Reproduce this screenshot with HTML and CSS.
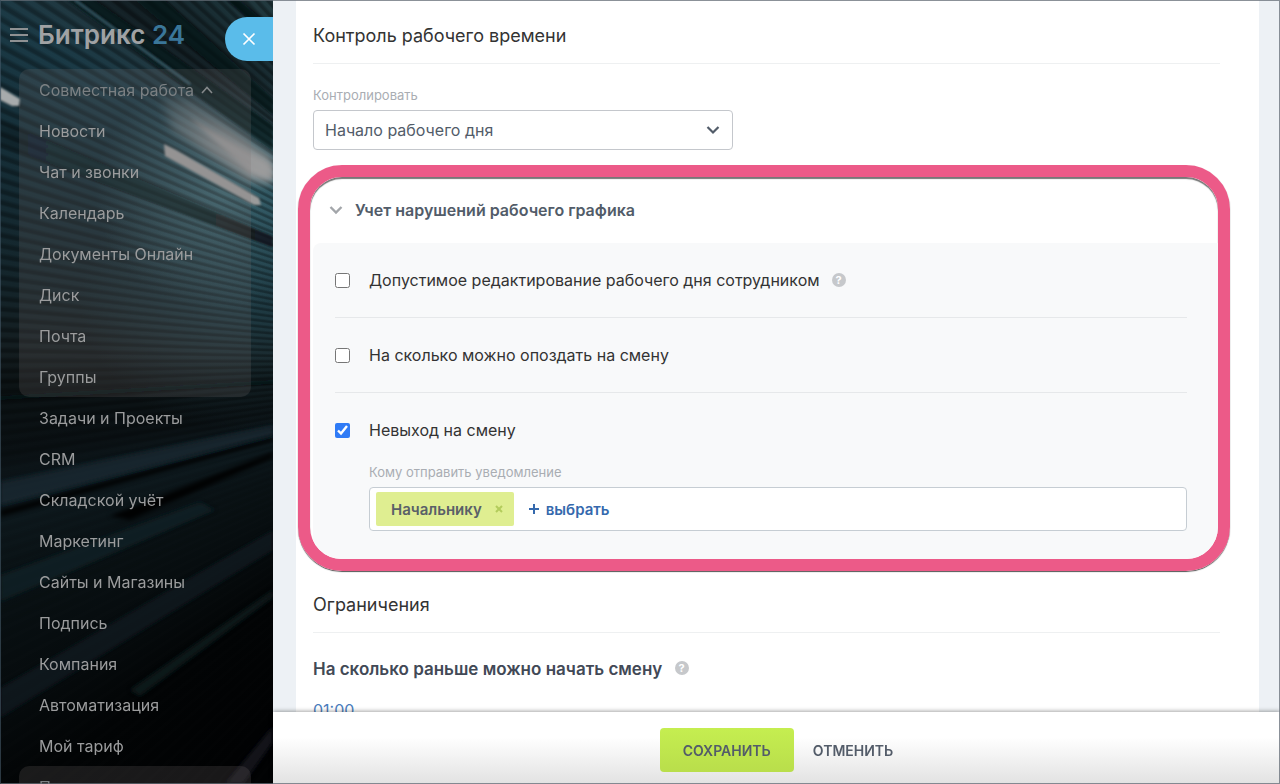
FILE: index.html
```html
<!DOCTYPE html>
<html lang="ru">
<head>
<meta charset="utf-8">
<title>Битрикс 24</title>
<link rel="stylesheet" href="styles.css">
</head>
<body>
<div class="app">
  <aside class="sidebar">
    <svg class="streaks" width="273" height="784" viewBox="0 0 273 784" aria-hidden="true">
      <defs>
        <filter id="soft"><feGaussianBlur stdDeviation="5"/></filter>
        <filter id="crisp"><feGaussianBlur stdDeviation="1"/></filter>
        <filter id="haze"><feGaussianBlur stdDeviation="2"/></filter>
        <linearGradient id="beam" x1="0" y1="0" x2="1" y2="1">
          <stop offset="0" stop-color="#7f8c90" stop-opacity=".1"/>
          <stop offset=".5" stop-color="#8a8f91" stop-opacity=".8"/>
          <stop offset="1" stop-color="#9a9c9d"/>
        </linearGradient>
        <linearGradient id="fade" x1="0" y1="0" x2="1" y2="0">
          <stop offset="0" stop-color="#0a1316" stop-opacity=".2"/>
          <stop offset="1" stop-color="#0a1316" stop-opacity=".8"/>
        </linearGradient>
      </defs>
      <g filter="url(#crisp)">
        <path d="M95 0L273 125V152L66 0Z" fill="#0a1114" opacity=".6"/>
        <path d="M75 0L190 84" stroke="#4d8091" stroke-width="1.5" fill="none" opacity=".8"/>
        <path d="M165 0L273 98V116L135 0Z" fill="#0a0f11" opacity=".6"/>
        <path d="M240 0L273 28V40L226 0Z" fill="#05090b" opacity=".8"/>
        <path d="M0 120L273 236V248L0 145Z" fill="url(#fade)"/>
      </g>
      <path d="M160 94L190 100L273 158V184L250 180L172 130Z" fill="url(#beam)" filter="url(#soft)"/>
      <path d="M190 118L273 166V180L250 172Z" fill="#a09f9f" opacity=".7" filter="url(#haze)"/>
      <g filter="url(#crisp)">
        <path d="M164 144L176 150L259 198L261 205L254 205L165 156Z" fill="#9b9b9b"/>
        <path d="M0 87L20 99L19 106L12 106L0 100Z" fill="#a7abac"/>
        <path d="M0 396L273 380V384L0 400Z" fill="#0a1012" opacity=".6"/>
      </g>
      <g filter="url(#haze)">
        <path d="M0 482L273 425V435L0 505Z" fill="#1c3038" opacity=".55"/>
        <path d="M0 510L273 437V441L0 517Z" fill="#030607" opacity=".9"/>
        <path d="M110 516L273 452V458L130 520Z" fill="#020405" opacity=".9"/>
        <path d="M0 575L200 502L215 510L0 602Z" fill="#13262c" opacity=".6"/>
        <path d="M0 688L273 530V550L0 718Z" fill="#13252c" opacity=".5"/>
        <path d="M130 690L273 590V597L140 696Z" fill="#162329" opacity=".6"/>
        <path d="M225 784L273 726V742L243 784Z" fill="#172025" opacity=".7"/>
      </g>
    </svg>
    <header class="brand">
      <button class="burger" aria-label="Меню">
        <svg width="20" height="16" viewBox="0 0 20 16" aria-hidden="true"><path d="M1 2H19M1 8H19M1 14H19" stroke="#8f9193" stroke-width="1.8"/></svg>
      </button>
      <a class="logo" href="#">Битрикс <span class="logo-num">24</span></a>
    </header>
    <button class="close" aria-label="Закрыть">
      <svg width="14" height="14" viewBox="0 0 14 14" aria-hidden="true"><path d="M1.500 1.500L12.500 12.500M12.500 1.500L1.500 12.500" stroke="#fff" stroke-width="1.700"/></svg>
    </button>
    <nav class="menu">
      <div class="group">
        <button class="item group-title">Совместная работа
          <svg width="14" height="10" viewBox="0 0 14 10" aria-hidden="true"><path d="M2 8L7 2.500L12 8" fill="none" stroke="#85898b" stroke-width="1.600"/></svg>
        </button>
        <a class="item" href="#">Новости</a>
        <a class="item" href="#">Чат и звонки</a>
        <a class="item" href="#">Календарь</a>
        <a class="item" href="#">Документы Онлайн</a>
        <a class="item" href="#">Диск</a>
        <a class="item" href="#">Почта</a>
        <a class="item" href="#">Группы</a>
      </div>
      <a class="item" href="#">Задачи и Проекты</a>
      <a class="item" href="#">CRM</a>
      <a class="item" href="#">Складской учёт</a>
      <a class="item" href="#">Маркетинг</a>
      <a class="item" href="#">Сайты и Магазины</a>
      <a class="item" href="#">Подпись</a>
      <a class="item" href="#">Компания</a>
      <a class="item" href="#">Автоматизация</a>
      <a class="item" href="#">Мой тариф</a>
      <div class="group">
        <button class="item group-title">Приложения</button>
      </div>
    </nav>
  </aside>

  <main class="panel">
    <div class="scroll">
      <div class="card">
        <h2 class="section-title">Контроль рабочего времени</h2>
        <div class="field">
          <label class="caption" for="control">Контролировать</label>
          <div class="select-wrap">
            <select class="select" id="control"><option>Начало рабочего дня</option></select>
            <svg class="select-arrow" width="14" height="10" viewBox="0 0 14 10" aria-hidden="true"><path d="M1.500 2L7 7.500L12.500 2" fill="none" stroke="#525c69" stroke-width="2.200"/></svg>
          </div>
        </div>

        <section class="frame">
          <button class="frame-head">
            <svg width="14" height="10" viewBox="0 0 14 10" aria-hidden="true"><path d="M1.500 2L7 7.500L12.500 2" fill="none" stroke="#a3a6aa" stroke-width="2.400"/></svg>
            Учет нарушений рабочего графика
          </button>
          <div class="options">
            <div class="option">
              <input class="check" type="checkbox" id="edit">
              <label for="edit">Допустимое редактирование рабочего дня сотрудником</label>
              <span class="hint">?</span>
            </div>
            <div class="option">
              <input class="check" type="checkbox" id="late">
              <label for="late">На сколько можно опоздать на смену</label>
            </div>
            <div class="option">
              <input class="check" type="checkbox" id="absent" checked>
              <label for="absent">Невыход на смену</label>
            </div>
            <div class="notify">
              <div class="caption">Кому отправить уведомление</div>
              <div class="tags">
                <span class="tag">Начальнику
                  <button class="tag-remove" aria-label="Удалить"><svg width="8" height="8" viewBox="0 0 8 8" aria-hidden="true"><path d="M1 1L7 7M7 1L1 7" stroke="#b3cc5c" stroke-width="2"/></svg></button>
                </span>
                <button class="add"><svg width="10" height="10" viewBox="0 0 10 10" aria-hidden="true"><path d="M5 0V10M0 5H10" stroke="#3569ad" stroke-width="2"/></svg>выбрать</button>
              </div>
            </div>
          </div>
        </section>

        <h2 class="section-title">Ограничения</h2>
        <h3 class="sub-title">На сколько раньше можно начать смену <span class="hint">?</span></h3>
        <a class="time" href="#">01:00</a>
      </div>
    </div>
    <footer class="footer">
      <button class="save">СОХРАНИТЬ</button>
      <button class="cancel">ОТМЕНИТЬ</button>
    </footer>
  </main>
</div>
</body>
</html>
```
FILE: styles.css
```css
* { box-sizing: border-box; }

body {
  margin: 0;
  font-family: Inter, "Open Sans", sans-serif;
  font-size: 16px;
  font-optical-sizing: none;
  color: #333;
}

button {
  border: 0;
  padding: 0;
  background: none;
  font: inherit;
  color: inherit;
}

a { color: inherit; text-decoration: none; }

.app {
  display: grid;
  grid-template-columns: 273px 1fr;
  height: 100vh;
  overflow: hidden;
  position: relative;
}

.app::after {
  content: "";
  position: absolute;
  inset: 0;
  border: 1px solid rgba(100, 108, 118, .75);
  border-left-color: rgba(70, 90, 105, .6);
  pointer-events: none;
}

/* Sidebar */
.sidebar {
  position: relative;
  overflow: hidden;
  background:
    radial-gradient(ellipse 130px 120px at 225px 190px, rgba(95, 150, 160, .5), transparent),
    radial-gradient(ellipse 160px 130px at 240px 300px, rgba(50, 95, 108, .4), transparent),
    conic-gradient(from 0deg at 592px 362px,
      #020304 222deg, #030506 233deg, #070c0e 240deg, #0a1215 250deg,
      #0f1b20 257deg, #0a1013 261deg, #0c1315 268deg, #141d20 271deg,
      #14252b 278deg, #152a32 285deg, #16303a 292deg, #1b3a46 300deg,
      #203841 304deg, #131f24 307deg, #1b3137 314deg, #2e474b 325deg);
}

/* Fine ribs, strongest in the upper half */
.sidebar::before {
  content: "";
  position: absolute;
  inset: 0;
  background: repeating-conic-gradient(from 269deg at 592px 362px, rgba(0, 0, 0, .3) 0deg .2deg, rgba(0, 0, 0, 0) .5deg .8deg, rgba(0, 0, 0, .3) 1deg);
  -webkit-mask-image: linear-gradient(#000 55%, transparent 68%);
  mask-image: linear-gradient(#000 48%, rgba(0, 0, 0, .2) 60%);
}

.streaks { position: absolute; inset: 0; }

.brand {
  position: relative;
  display: flex;
  align-items: center;
  gap: 9px;
  height: 69px;
  padding-left: 9px;
}

.logo {
  font-size: 26px;
  font-weight: 600;
  line-height: 32px;
  color: #a0a2a4;
}

.burger { display: flex; }

.logo-num { color: #3a7699; }

.close {
  position: absolute;
  top: 17px;
  right: 0;
  display: flex;
  align-items: center;
  justify-content: center;
  width: 48px;
  height: 44px;
  border-radius: 22px 0 0 22px;
  background: #5abcea;
}

.menu { position: relative; padding: 0 22px 0 19px; }

.group {
  border-radius: 10px;
  background: rgba(125, 115, 115, .2);
}

.item {
  display: flex;
  align-items: center;
  gap: 6px;
  width: 100%;
  height: 41px;
  padding-left: 20px;
  font-size: 16px;
  color: #9b9c9d;
  white-space: nowrap;
}

.group-title { color: #7b8083; }

/* Panel */
.panel {
  display: flex;
  flex-direction: column;
  min-width: 0;
  height: 100vh;
  background: #edf1f5;
}

.scroll {
  flex: 1;
  min-height: 0;
  overflow: hidden;
  padding: 0 21px 0 23px;
}

.card {
  min-height: 100%;
  padding: 8px 39px 0 17px;
  background: #fff;
}

.section-title {
  margin: 0;
  padding: 16px 0 15px;
  border-bottom: 1px solid #eef0f1;
  font-size: 18px;
  font-weight: 400;
  font-optical-sizing: auto;
  line-height: 24px;
}

.field { padding-top: 21px; }

.caption {
  display: block;
  margin-bottom: 5px;
  font-size: 13px;
  line-height: 20px;
  color: #a9adb3;
}

.select-wrap { position: relative; max-width: 420px; }

.select {
  appearance: none;
  display: block;
  width: 100%;
  height: 40px;
  padding: 0 36px 0 11px;
  border: 1px solid #c4c7cc;
  border-radius: 4px;
  background: #fff;
  font: inherit;
  color: #525c69;
}

.select-arrow {
  position: absolute;
  top: 15px;
  right: 13px;
  pointer-events: none;
}

.frame {
  margin: 15px -10px 6px -15px;
  border: 12px solid #ec5a88;
  border-radius: 44px;
  overflow: hidden;
  box-shadow: 0 1px 1px #555, inset 0 2px 1px #777;
}

.frame-head {
  display: flex;
  align-items: center;
  gap: 12px;
  height: 66px;
  padding-left: 19px;
  font-weight: 600;
  color: #525c69;
}

.options {
  margin-left: 3px;
  padding: 0 31px 28px 22px;
  border-top-left-radius: 8px;
  background: #f8f9fa;
}

.option {
  display: flex;
  align-items: center;
  height: 75px;
  border-bottom: 1px solid #e6e8ea;
  font-optical-sizing: auto;
}

.option:nth-child(3) { height: 74px; border-bottom: 0; }

.check {
  width: 15px;
  height: 15px;
  margin: 0 19px 0 0;
  accent-color: #2f7bf6;
}

.hint {
  display: inline-flex;
  align-items: center;
  justify-content: center;
  width: 14px;
  height: 14px;
  margin-left: 12px;
  border-radius: 50%;
  background: #c6c8cb;
  font-size: 11px;
  font-weight: 700;
  line-height: 14px;
  color: #fff;
}

.notify { padding-left: 34px; margin-top: -5px; }

.tags {
  display: flex;
  align-items: center;
  gap: 15px;
  height: 44px;
  padding: 5px 6px;
  border: 1px solid #c6cdd3;
  border-radius: 4px;
  background: #fff;
}

.tag {
  display: flex;
  align-items: center;
  gap: 13px;
  height: 34px;
  padding: 0 11px 0 15px;
  border-radius: 2px;
  background: #dfee91;
  font-size: 15px;
  font-weight: 600;
  color: #596068;
}

.tag-remove { display: flex; }

.add {
  display: flex;
  align-items: center;
  gap: 7px;
  font-size: 15px;
  font-weight: 600;
  color: #3569ad;
}

.sub-title {
  margin: 0;
  padding-top: 24px;
  font-size: 17px;
  font-weight: 600;
  line-height: 24px;
  color: #424956;
}

.sub-title .hint { margin-left: 8px; vertical-align: 3px; }

.time {
  display: block;
  margin-top: 17px;
  line-height: 24px;
  color: #4a7dbd;
}

.footer {
  position: relative;
  display: flex;
  align-items: center;
  justify-content: center;
  gap: 19px;
  height: 72px;
  padding-top: 4px;
  background: linear-gradient(#fff 35%, #e2e2e2);
  box-shadow: 0 -1px 4px rgba(0, 0, 0, .35);
}

.save,
.cancel {
  height: 44px;
  font-size: 14px;
  font-weight: 600;
  color: #535c69;
}

.save {
  padding: 0 23px;
  border-radius: 4px;
  background: linear-gradient(#c5ee50, #b9de4b);
}
```
